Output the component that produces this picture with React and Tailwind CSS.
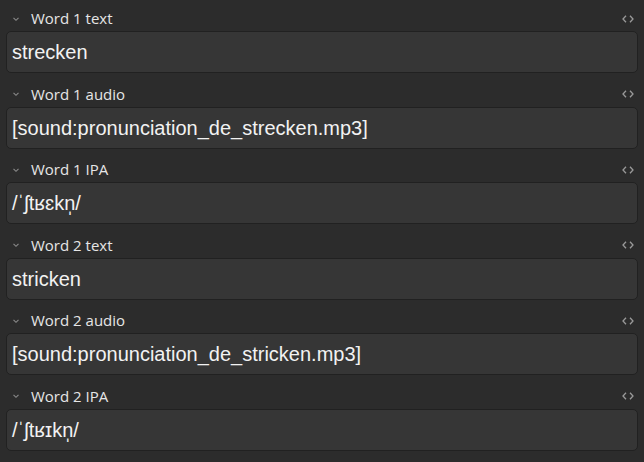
import React from 'react';

const fields = [
    { label: 'Word 1 text', value: 'strecken' },
    { label: 'Word 1 audio', value: '[sound:pronunciation_de_strecken.mp3]' },
    { label: 'Word 1 IPA', value: '/ˈʃtʁɛkn̩/' },
    { label: 'Word 2 text', value: 'stricken' },
    { label: 'Word 2 audio', value: '[sound:pronunciation_de_stricken.mp3]' },
    { label: 'Word 2 IPA', value: '/ˈʃtʁɪkn̩/' },
];

const Chevron = () => (
    <svg width="10" height="10" viewBox="0 0 10 10" className="text-[#8a8a8a]">
        <path d="M2.5 3.8 L5 6.3 L7.5 3.8" fill="none" stroke="currentColor" strokeWidth="1.1" />
    </svg>
);

const CodeIcon = () => (
    <svg width="14" height="10" viewBox="0 0 14 10" className="text-[#9a9a9a]">
        <path d="M5 1.8 L2 5 L5 8.2 M9 1.8 L12 5 L9 8.2" fill="none" stroke="currentColor" strokeWidth="1.3" />
    </svg>
);

const Field = ({ label, value }) => (
    <div className="mb-[8.5px]">
        <div className="h-[25px] flex items-center pl-[11px] pr-[9px]">
            <Chevron />
            <span className="ml-[10px] -mt-[1px] text-[15px] leading-[20px] text-[#e6e6e6] font-['Open_Sans',sans-serif]">{label}</span>
            <div className="flex-1" />
            <CodeIcon />
        </div>
        <div className="mx-[6px] h-[42px] rounded-[5px] border border-[#212121] bg-[#363636] flex items-center px-[5px]">
            <span className="text-[20px] text-[#f2f2f2] font-['Liberation_Sans',Arial,sans-serif] whitespace-nowrap">{value}</span>
        </div>
    </div>
);

export default function App() {
    return (
        <div className="w-[644px] h-[462px] bg-[#2c2c2c] pt-[6px] overflow-hidden">
            {fields.map((f) => (
                <Field key={f.label} {...f} />
            ))}
        </div>
    );
}
